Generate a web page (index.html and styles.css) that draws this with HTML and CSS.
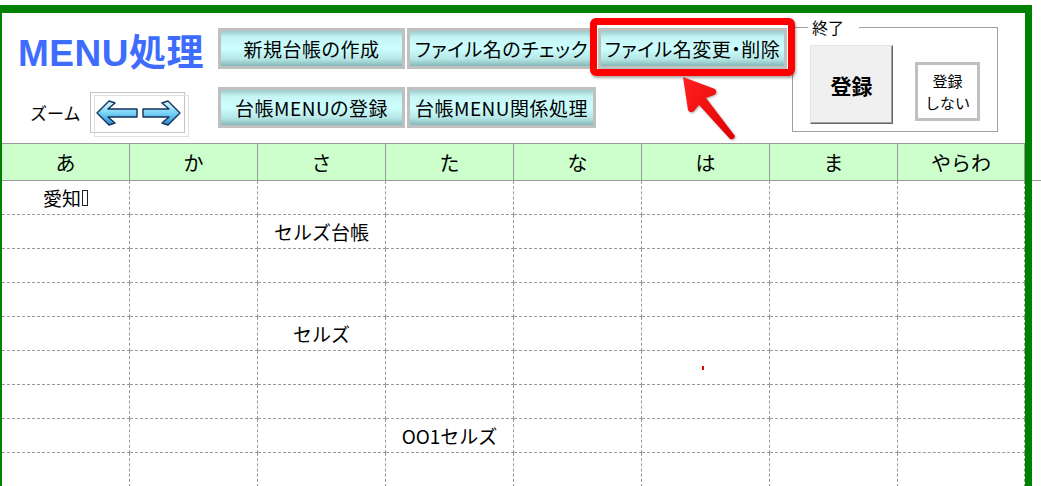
FILE: index.html
```html
<!doctype html>
<html>
  <head>
    <title>MENU処理</title>
    <link rel="stylesheet" href="styles.css">
  </head>
  <body>
	<div class="sheet">
		<div class="top">
			<div class="brand">
				<div class="title">MENU処理</div>
				<div class="zoom">
					<span class="zoom-label">ズーム</span>
					<div class="zoom-box">
						<svg width="93" height="39" viewBox="0 0 93 39">
							<defs>
								<linearGradient id="ag" x1="0" y1="0" x2="0" y2="1">
									<stop offset="0" stop-color="#e0f8ff"/>
									<stop offset=".5" stop-color="#78d4f6"/>
									<stop offset="1" stop-color="#2a88d0"/>
								</linearGradient>
							</defs>
							<path d="M6 20 L18 8 L24 10 L17 16 L46 16 L46 24 L17 24 L24 30 L18 32 Z" fill="url(#ag)" stroke="#13325c" stroke-width="1.4" stroke-linejoin="round"/>
							<path d="M89 20 L77 8 L71 10 L78 16 L52 16 L52 24 L78 24 L71 30 L77 32 Z" fill="url(#ag)" stroke="#13325c" stroke-width="1.4" stroke-linejoin="round"/>
						</svg>
					</div>
				</div>
			</div>
			<div class="menu">
				<button class="btn">新規台帳の作成</button>
				<button class="btn">ファイル名のチェック</button>
				<button class="btn">ファイル名変更・削除</button>
				<button class="btn">台帳MENUの登録</button>
				<button class="btn">台帳MENU関係処理</button>
			</div>
			<div class="quit">
				<span class="quit-label">終了</span>
				<button class="save">登録</button>
				<button class="nosave">登録<br>しない</button>
			</div>
		</div>
		<div class="grid">
			<div class="hd">あ</div><div class="hd">か</div><div class="hd">さ</div><div class="hd">た</div>
			<div class="hd">な</div><div class="hd">は</div><div class="hd">ま</div><div class="hd">やらわ</div>

			<div class="cell">愛知<span class="tofu"></span></div><div class="cell"></div><div class="cell"></div><div class="cell"></div>
			<div class="cell"></div><div class="cell"></div><div class="cell"></div><div class="cell"></div>

			<div class="cell"></div><div class="cell"></div><div class="cell">セルズ台帳</div><div class="cell"></div>
			<div class="cell"></div><div class="cell"></div><div class="cell"></div><div class="cell"></div>

			<div class="cell"></div><div class="cell"></div><div class="cell"></div><div class="cell"></div>
			<div class="cell"></div><div class="cell"></div><div class="cell"></div><div class="cell"></div>

			<div class="cell"></div><div class="cell"></div><div class="cell"></div><div class="cell"></div>
			<div class="cell"></div><div class="cell"></div><div class="cell"></div><div class="cell"></div>

			<div class="cell"></div><div class="cell"></div><div class="cell">セルズ</div><div class="cell"></div>
			<div class="cell"></div><div class="cell"></div><div class="cell"></div><div class="cell"></div>

			<div class="cell"></div><div class="cell"></div><div class="cell"></div><div class="cell"></div>
			<div class="cell"></div><div class="cell"><span class="dot"></span></div><div class="cell"></div><div class="cell"></div>

			<div class="cell"></div><div class="cell"></div><div class="cell"></div><div class="cell"></div>
			<div class="cell"></div><div class="cell"></div><div class="cell"></div><div class="cell"></div>

			<div class="cell"></div><div class="cell"></div><div class="cell"></div><div class="cell">OO1セルズ</div>
			<div class="cell"></div><div class="cell"></div><div class="cell"></div><div class="cell"></div>

			<div class="cell"></div><div class="cell"></div><div class="cell"></div><div class="cell"></div>
			<div class="cell"></div><div class="cell"></div><div class="cell"></div><div class="cell"></div>
		</div>
	</div>

	<!-- annotation over the sheet -->
	<div class="highlight"></div>
	<svg class="pointer" width="100" height="85" viewBox="0 0 100 85">
		<defs>
			<linearGradient id="rg" x1="0" y1="0" x2="1" y2="1">
				<stop offset="0" stop-color="#ff2020"/>
				<stop offset="1" stop-color="#e00000"/>
			</linearGradient>
		</defs>
		<path d="M23 17 L55 29 Q58 33 54 35 L46 38 L75 76 Q74 80 70 79 L39 45 L34 51 Q30 54 28 50 Z" fill="url(#rg)"/>
	</svg>
  </body>
</html>
```

FILE: styles.css
```css
body { margin: 0; overflow: hidden; font-family: "Noto Sans CJK JP", sans-serif; color: #000;
  background: linear-gradient(#999, #999) no-repeat 1032px 180px / 9px 1px; }

.sheet { margin-top: 5px; width: 1023px; border: solid #008000; border-width: 8px 7px 0 2px; background: #fff; }

.top { display: flex; height: 130px; }

.brand { width: 216px; }
.title { margin: 21px 0 0 16px; height: 40px; line-height: 40px; font-family: "Liberation Sans", "Noto Sans CJK JP", sans-serif; font-weight: bold; font-size: 37px; color: #3d6cff; letter-spacing: 0.5px; }
.zoom { display: flex; align-items: center; margin-top: 18px; padding-left: 28px; }
.zoom-label { font-size: 17px; width: 60px; }
.zoom-box { position: relative; width: 93px; height: 39px; border: 1px solid #c4c4c4; }
.zoom-box::before { content: ""; position: absolute; top: 2px; left: 3px; right: -5px; bottom: -5px; border: 1px solid #e0e0e0; }
.zoom-box svg { position: relative; display: block; }

.menu { display: grid; grid-template-columns: 187px 189px 189px; grid-auto-rows: 41px; column-gap: 2px; row-gap: 18px; margin-top: 15px; align-content: start; }
.btn { margin: 0; padding: 0; border: 3px solid #c0c0c0; font-family: inherit; font-size: 19px; color: #000; white-space: nowrap; overflow: hidden;
  font-feature-settings: "palt"; letter-spacing: 0.5px;
  background: linear-gradient(#9ccccc 0%, #c6f4f4 18%, #ccffff 50%, #b6e6e6 80%, #84b8b8 100%); }

.quit { position: relative; box-sizing: border-box; display: flex; align-items: flex-start; width: 206px; height: 105px; margin: 14px 0 0 5px; padding: 17px 0 0 17px; border: 1px solid #a0a0a0; }
.quit-label { position: absolute; top: -9px; left: 15px; padding: 0 15px 0 4px; background: #fff; font-size: 16px; line-height: 16px; }
.save { box-sizing: border-box; width: 83px; height: 79px; margin: 0; padding: 0; background: #f0f0f0; border: 1px solid; border-color: #e4e4e4 #696969 #696969 #e4e4e4; box-shadow: inset -1px -1px 0 #a0a0a0;
  font-family: inherit; font-weight: bold; font-size: 21px; color: #000; }
.nosave { box-sizing: border-box; width: 65px; height: 59px; margin: 17px 0 0 22px; padding: 0; background: #fff; border: 3px solid #c0c0c0;
  font-family: inherit; font-size: 15px; line-height: 22px; color: #000; }

.grid { display: grid; grid-template-columns: repeat(7, 128px) 127px; }
.hd, .cell { box-sizing: border-box; display: flex; align-items: center; justify-content: center; }
.hd { height: 38px; background: #ccffcc; border-top: 1px solid #999; border-bottom: 1px solid #999; border-right: 1px solid #999; font-size: 20px; }
.cell { height: 34px; border-right: 1px dashed #999; border-bottom: 1px dashed #999; font-size: 19px; }
.tofu { display: inline-block; width: 4px; height: 14px; margin-left: 1px; border: 1px solid #222; }
.dot { display: inline-block; width: 2px; height: 4px; margin-right: 6px; background: #e00000; }

.highlight { position: absolute; left: 590px; top: 18px; width: 191px; height: 44px; border: 7px solid #ff0000; border-radius: 6px; box-shadow: 1px 2px 3px rgba(0, 0, 0, 0.35); }
.pointer { position: absolute; left: 660px; top: 60px; filter: drop-shadow(1px 1px 1px rgba(0, 0, 0, 0.3)); }
```
